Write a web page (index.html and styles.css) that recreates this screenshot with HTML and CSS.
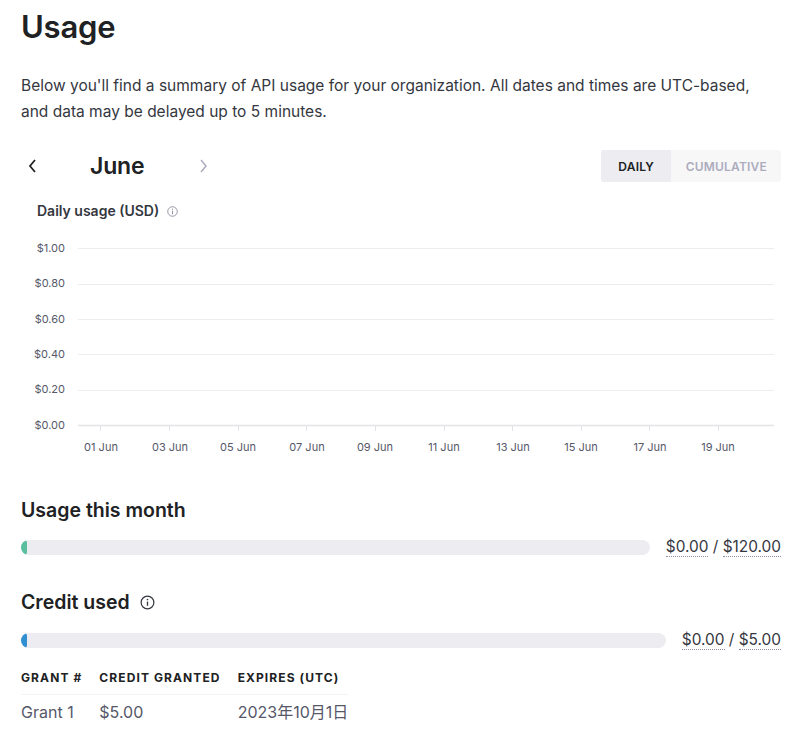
FILE: index.html
```html
<!DOCTYPE html>
<html>
<head>
<meta charset="utf-8">
<link rel="stylesheet" href="styles.css">
</head>
<body>
<div class="page">
  <h1 class="title">Usage</h1>
  <p class="intro">Below you'll find a summary of API usage for your organization. All dates and times are UTC-based, and data may be delayed up to 5 minutes.</p>

  <div class="navrow">
    <div class="monthnav">
      <svg class="chev" width="12" height="16" viewBox="0 0 12 16"><path d="M8 2 L3 8 L8 14" fill="none" stroke="#202123" stroke-width="1.8"/></svg>
      <span class="month">June</span>
      <svg class="chev chev-r" width="12" height="16" viewBox="0 0 12 16"><path d="M4 2 L9 8 L4 14" fill="none" stroke="#acacbe" stroke-width="1.5"/></svg>
    </div>
    <div class="toggle">
      <span class="seg seg-active">DAILY</span>
      <span class="seg">CUMULATIVE</span>
    </div>
  </div>

  <div class="chart-title">Daily usage (USD)
    <svg class="info-sm" width="11" height="11" viewBox="0 0 12 12"><circle cx="6" cy="6" r="5.2" fill="none" stroke="#8e8ea0" stroke-width="1"/><line x1="6" y1="5.2" x2="6" y2="9" stroke="#8e8ea0" stroke-width="1.1"/><circle cx="6" cy="3.5" r="0.7" fill="#8e8ea0"/></svg>
  </div>

  <svg class="chart" width="780" height="240" viewBox="0 0 780 240">
    <g class="ylabels" font-family="Inter, 'Noto Sans', sans-serif" font-size="11" fill="#565869" text-anchor="end">
      <text x="65" y="21">$1.00</text>
      <text x="65" y="56">$0.80</text>
      <text x="65" y="92">$0.60</text>
      <text x="65" y="127">$0.40</text>
      <text x="65" y="162">$0.20</text>
      <text x="65" y="198">$0.00</text>
    </g>
    <g stroke="#ececf1" stroke-width="1">
      <line x1="78" y1="17.5" x2="774" y2="17.5"/>
      <line x1="78" y1="53.5" x2="774" y2="53.5"/>
      <line x1="78" y1="88.5" x2="774" y2="88.5"/>
      <line x1="78" y1="123.5" x2="774" y2="123.5"/>
      <line x1="78" y1="159.5" x2="774" y2="159.5"/>
    </g>
    <line x1="78" y1="194.5" x2="774" y2="194.5" stroke="#e3e3e8" stroke-width="1.5"/>
    <g stroke="#e3e3e8" stroke-width="1">
      <line x1="100.5" y1="195" x2="100.5" y2="200"/>
      <line x1="169.5" y1="195" x2="169.5" y2="200"/>
      <line x1="238.5" y1="195" x2="238.5" y2="200"/>
      <line x1="306.5" y1="195" x2="306.5" y2="200"/>
      <line x1="375.5" y1="195" x2="375.5" y2="200"/>
      <line x1="444.5" y1="195" x2="444.5" y2="200"/>
      <line x1="512.5" y1="195" x2="512.5" y2="200"/>
      <line x1="581.5" y1="195" x2="581.5" y2="200"/>
      <line x1="649.5" y1="195" x2="649.5" y2="200"/>
      <line x1="718.5" y1="195" x2="718.5" y2="200"/>
    </g>
    <g font-family="Inter, 'Noto Sans', sans-serif" font-size="11" fill="#565869" text-anchor="middle">
      <text x="101" y="220">01 Jun</text>
      <text x="170" y="220">03 Jun</text>
      <text x="238" y="220">05 Jun</text>
      <text x="307" y="220">07 Jun</text>
      <text x="375" y="220">09 Jun</text>
      <text x="444" y="220">11 Jun</text>
      <text x="513" y="220">13 Jun</text>
      <text x="581" y="220">15 Jun</text>
      <text x="650" y="220">17 Jun</text>
      <text x="718" y="220">19 Jun</text>
    </g>
  </svg>

  <section class="meter-section">
    <h2 class="section-title">Usage this month</h2>
    <div class="meter-row">
      <div class="bar"><div class="fill fill-green"></div></div>
      <div class="amount"><span class="dotted">$0.00</span> / <span class="dotted">$120.00</span></div>
    </div>
  </section>

  <section class="meter-section">
    <h2 class="section-title">Credit used
      <svg class="info-lg" width="15" height="15" viewBox="0 0 16 16"><circle cx="8" cy="8" r="6.8" fill="none" stroke="#353740" stroke-width="1.3"/><line x1="8" y1="7" x2="8" y2="11.5" stroke="#353740" stroke-width="1.4"/><circle cx="8" cy="4.8" r="0.9" fill="#353740"/></svg>
    </h2>
    <div class="meter-row">
      <div class="bar"><div class="fill fill-blue"></div></div>
      <div class="amount"><span class="dotted">$0.00</span> / <span class="dotted">$5.00</span></div>
    </div>
  </section>

  <table class="grants">
    <thead>
      <tr><th>GRANT #</th><th>CREDIT GRANTED</th><th>EXPIRES (UTC)</th></tr>
    </thead>
    <tbody>
      <tr><td>Grant 1</td><td>$5.00</td><td>2023年10月1日</td></tr>
    </tbody>
  </table>
</div>
</body>
</html>
```

FILE: styles.css
```css
* { box-sizing: border-box; }
html, body { margin: 0; padding: 0; background: #fff; }
body {
  font-family: Inter, "Noto Sans", "Noto Sans CJK SC", sans-serif;
  color: #353740;
}
.page {
  padding: 7px 23px 0 21px;
}
.title {
  margin: 0;
  font-size: 31px;
  line-height: 40px;
  font-weight: 600;
  color: #202123;
  letter-spacing: -0.2px;
}
.intro {
  margin: 26px 0 0;
  font-size: 15.5px;
  line-height: 26px;
  color: #353740;
  width: 745px;
}
.navrow {
  margin-top: 25px;
  display: flex;
  justify-content: space-between;
  align-items: center;
}
.monthnav {
  display: flex;
  align-items: center;
  padding-left: 6px;
}
.chev { display: block; }
.month {
  font-size: 23px;
  font-weight: 600;
  color: #202123;
  margin-left: 51px;
  width: 107px;
  letter-spacing: -0.2px;
}
.toggle {
  display: flex;
  background: #f7f7f8;
  border-radius: 3px;
  height: 32px;
}
.seg {
  display: flex;
  align-items: center;
  justify-content: center;
  font-size: 12px;
  font-weight: 600;
  letter-spacing: 0.2px;
  color: #acacbe;
  padding: 0 14px 0 15px;
}
.seg-active {
  background: #ececf1;
  color: #202123;
  width: 70px;
  border-radius: 3px 0 0 3px;
}
.chart-title {
  margin: 19px 0 0 16px;
  font-size: 14px;
  font-weight: 600;
  color: #353740;
  display: flex;
  align-items: center;
  gap: 8px;
  line-height: 20px;
}
.chart {
  display: block;
  margin: 10px 0 0 -21px;
}
.section-title {
  margin: 0;
  font-size: 19.5px;
  line-height: 26px;
  font-weight: 600;
  color: #202123;
  display: flex;
  align-items: center;
  gap: 10px;
}
.meter-section:first-of-type .section-title { margin-top: 26px; }
.meter-section + .meter-section .section-title { margin-top: 31px; }
.meter-row {
  display: flex;
  align-items: center;
  gap: 16px;
  margin-top: 13px;
}
.meter-section + .meter-section .meter-row { margin-top: 14px; }
.bar {
  flex: 1;
  height: 15px;
  background: #ececf1;
  border-radius: 8px;
  overflow: hidden;
}
.fill {
  height: 100%;
  width: 6px;
  border-radius: 3px;
}
.fill-green { background: #5bbf9f; }
.fill-blue { background: #2f8fd0; }
.amount {
  font-size: 15.4px;
  color: #353740;
  white-space: nowrap;
  line-height: 22px;
}
.dotted {
  border-bottom: 1px dotted #8e8ea0;
}
.grants {
  margin-top: 19px;
  border-collapse: collapse;
}
.grants th {
  text-align: left;
  font-size: 12px;
  font-weight: 700;
  letter-spacing: 1.1px;
  color: #202123;
  padding: 0 17px 8px 0;
  border-bottom: 1px solid #f3f3f5;
  line-height: 16px;
}
.grants th:last-child { padding-right: 0; }
.grants td {
  font-size: 16px;
  color: #565869;
  padding: 7px 17px 0 0;
  line-height: 20px;
}
.grants td:last-child { padding-right: 0; }
```
